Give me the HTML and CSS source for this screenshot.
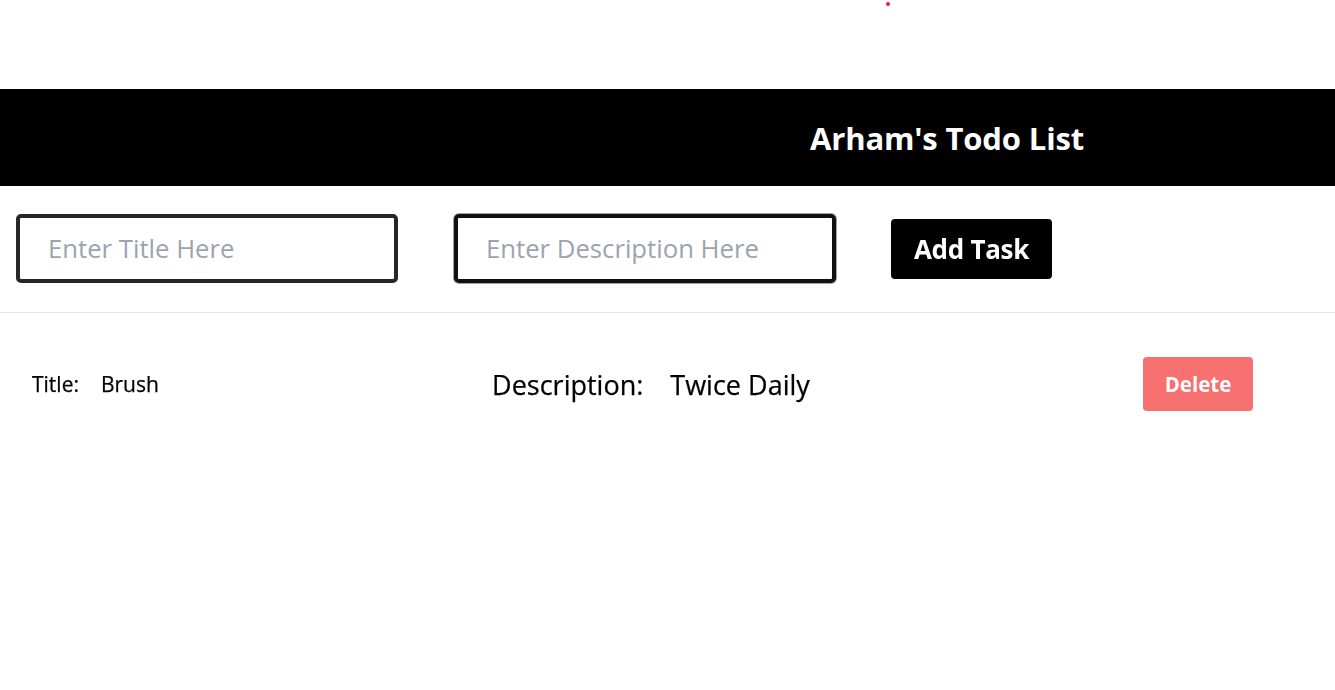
FILE: index.html
```html
<!DOCTYPE html>
<html>
<head>
<meta charset="utf-8">
<link rel="stylesheet" href="styles.css">
</head>
<body>
<span class="dot"></span>
<div class="spacer"></div>
<header class="header">
  <h1 class="title">Arham's Todo List</h1>
</header>
<form class="form">
  <input class="field" type="text" placeholder="Enter Title Here">
  <input class="field" type="text" placeholder="Enter Description Here" autofocus>
  <button class="add" type="button">Add Task</button>
</form>
<hr class="rule">
<ul class="list">
  <li class="item">
    <div class="group small"><span>Title:</span><span>Brush</span></div>
    <div class="group big"><span>Description:</span><span>Twice Daily</span></div>
    <button class="delete" type="button">Delete</button>
  </li>
</ul>
</body>
</html>
```
FILE: styles.css
```css
html, body {
  margin: 0;
  padding: 0;
  background: #fff;
  font-family: "Open Sans", "Noto Sans", sans-serif;
  color: #000;
}
.dot {
  position: absolute;
  top: 2px;
  left: 886px;
  width: 4px;
  height: 4px;
  border-radius: 50%;
  background: #e11d2a;
}
.spacer {
  height: 89px;
}
.header {
  background: #000;
  height: 97px;
  display: flex;
  align-items: center;
  padding-left: 810px;
}
.title {
  margin: 0;
  color: #fff;
  font-size: 31px;
  font-weight: 700;
  letter-spacing: -0.15px;
}
.form {
  display: flex;
  align-items: center;
  padding: 28px 16px 0;
  height: 69px;
}
.field {
  box-sizing: border-box;
  width: 382px;
  height: 69px;
  border: 4px solid #27272a;
  border-radius: 5px;
  padding: 0 0 0 28px;
  font-family: inherit;
  font-size: 25.7px;
  color: #000;
  margin-right: 56px;
  outline: none;
}
.field::placeholder {
  color: #9ca3af;
}
.field:focus {
  border-color: #111;
  box-shadow: 0 0 0 1px #a3a3a3;
}
.add {
  margin-left: -1px;
  width: 161px;
  height: 60px;
  background: #000;
  color: #fff;
  border: none;
  border-radius: 4px;
  font-family: inherit;
  font-size: 26px;
  font-weight: 700;
  letter-spacing: -0.3px;
}
.rule {
  margin: 29px 0 0;
  border: none;
  border-top: 1px solid #e5e5e5;
}
.list {
  list-style: none;
  margin: 0;
  padding: 44px 82px 0 32px;
}
.item {
  display: flex;
  justify-content: space-between;
  align-items: center;
}
.group {
  display: flex;
  font-weight: 500;
  -webkit-text-stroke: 0.25px #000;
}
.small {
  font-size: 21px;
  gap: 22px;
}
.big {
  font-size: 27px;
  gap: 27px;
}
.delete {
  width: 110px;
  height: 54px;
  background: #f87171;
  color: #fff;
  border: none;
  border-radius: 4px;
  font-family: inherit;
  font-size: 20.5px;
  font-weight: 700;
}
```
